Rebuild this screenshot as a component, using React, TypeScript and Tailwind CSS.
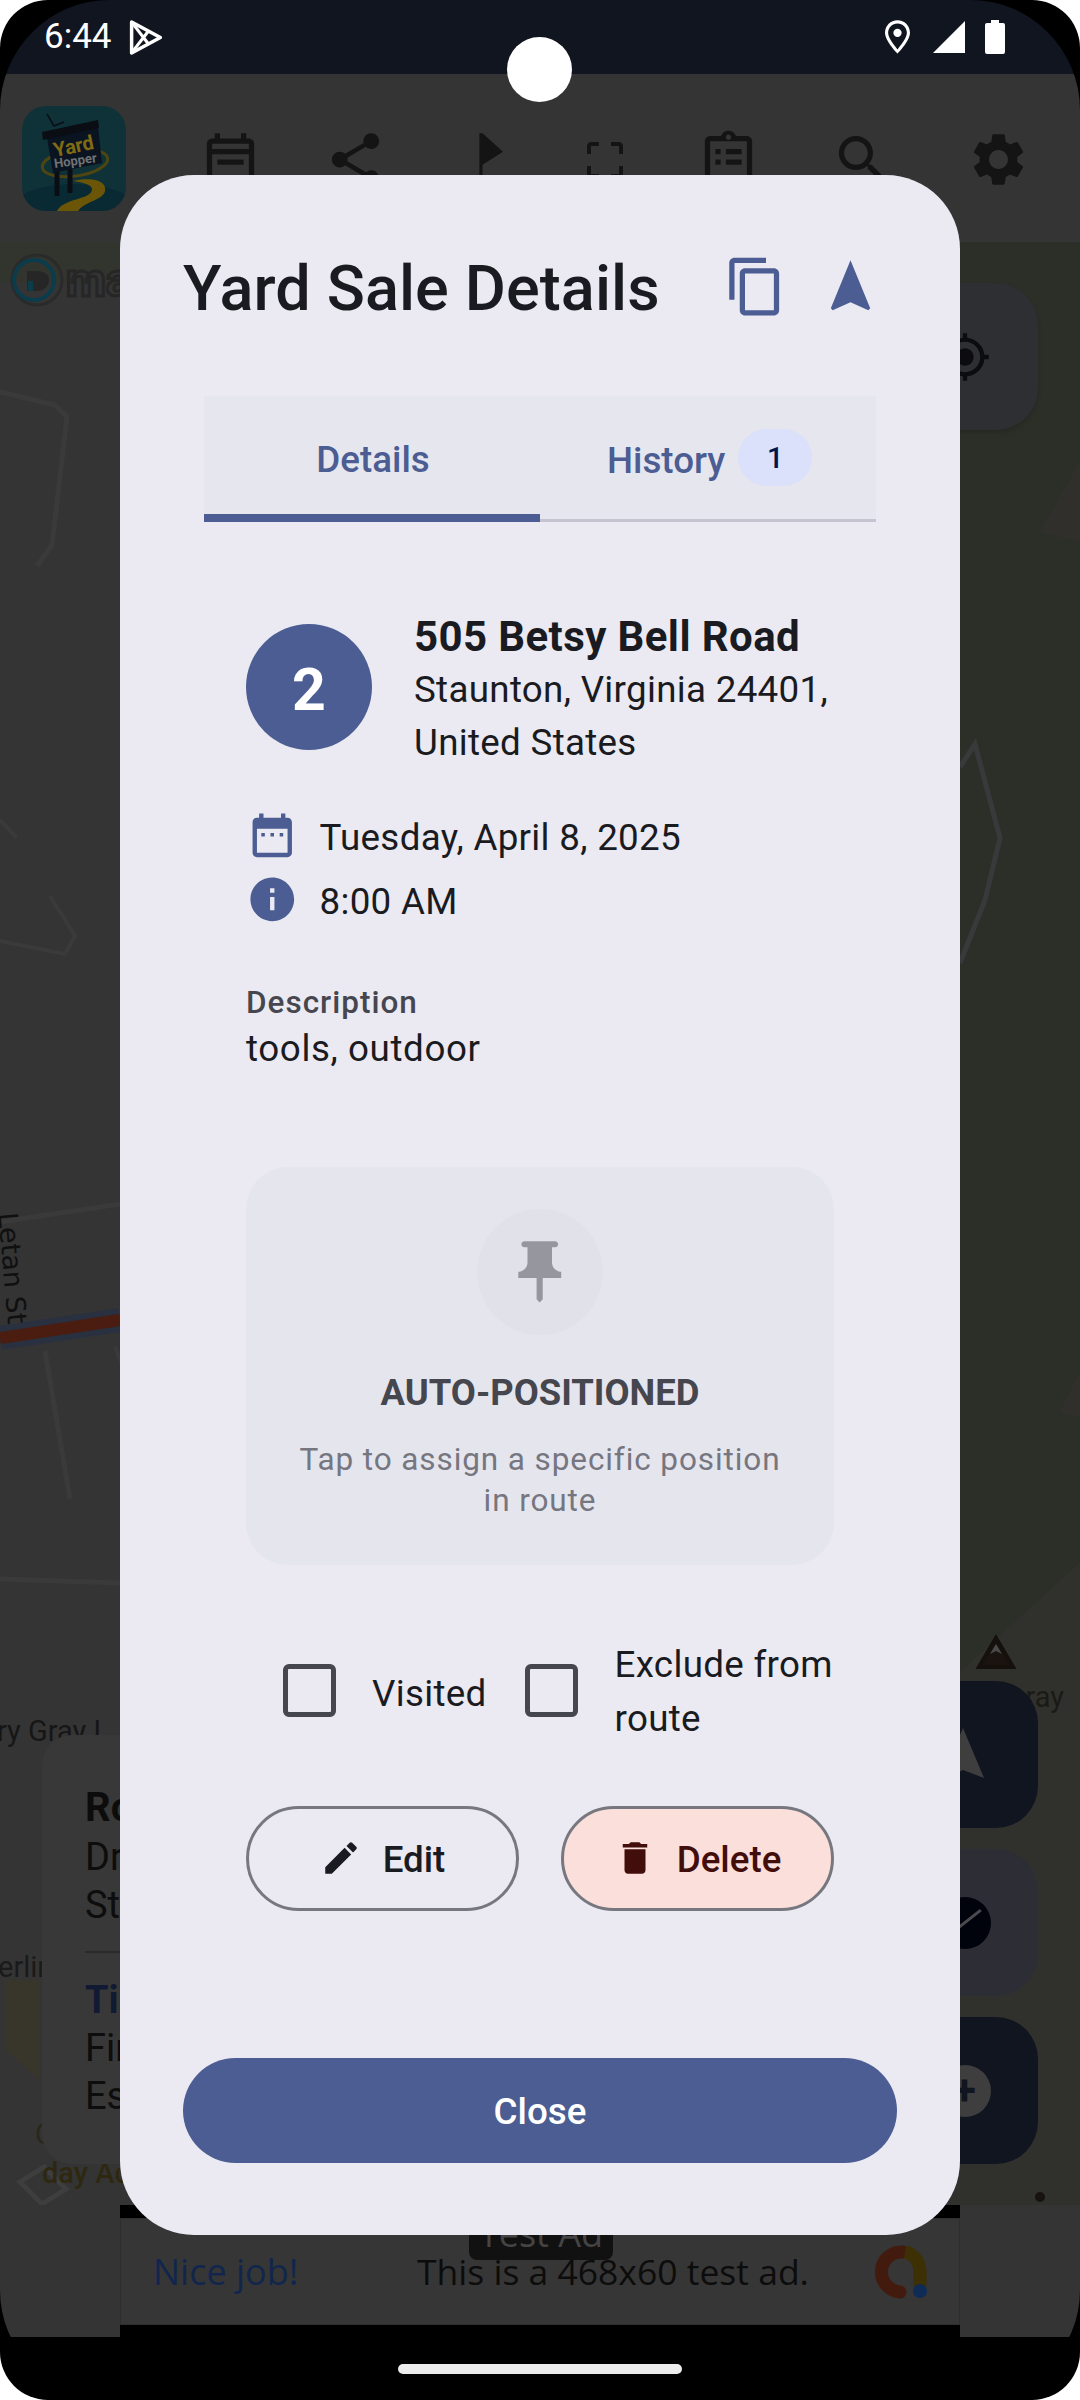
import React from "react";

const Ic = ({ d, size, className, vb = "0 0 24 24" }: { d: string; size: string; className: string; vb?: string }) => (
  <svg viewBox={vb} className={size + " " + className + " shrink-0"} fill="currentColor">
    <path d={d} fillRule="evenodd" />
  </svg>
);

const P = {
  copy: "M16 1H4c-1.1 0-2 .9-2 2v14h2V3h12V1zm3 4H8c-1.1 0-2 .9-2 2v14c0 1.1.9 2 2 2h11c1.1 0 2-.9 2-2V7c0-1.1-.9-2-2-2zm0 16H8V7h11v14z",
  nav: "M12 2L4.5 20.29l.71.71L12 18l6.79 3 .71-.71z",
  cal: "M19 4h-1V2h-2v2H8V2H6v2H5c-1.1 0-2 .9-2 2v14c0 1.1.9 2 2 2h14c1.1 0 2-.9 2-2V6c0-1.1-.9-2-2-2zM5 20V9h14v11H5zM7 11h1.6v1.6H7zM11.2 11h1.6v1.6h-1.6zM15.4 11H17v1.6h-1.6z",
  info: "M12 2C6.48 2 2 6.48 2 12s4.48 10 10 10 10-4.48 10-10S17.52 2 12 2zm1 15h-2v-6h2v6zm0-8h-2V7h2v2z",
  pin: "M16 9V4h1c.55 0 1-.45 1-1s-.45-1-1-1H7c-.55 0-1 .45-1 1s.45 1 1 1h1v5c0 1.66-1.34 3-3 3v2h5.97v7l1 1 1-1v-7H19v-2c-1.66 0-3-1.34-3-3z",
  edit: "M3 17.25V21h3.75L17.81 9.94l-3.75-3.75L3 17.25zM20.71 7.04c.39-.39.39-1.02 0-1.41l-2.34-2.34c-.39-.39-1.02-.39-1.41 0l-1.83 1.83 3.75 3.75 1.83-1.83z",
  del: "M6 19c0 1.1.9 2 2 2h8c1.1 0 2-.9 2-2V7H6v12zM19 4h-3.5l-1-1h-5l-1 1H5v2h14V4z",
  share: "M18 16.08c-.76 0-1.44.3-1.96.77L8.91 12.7c.05-.23.09-.46.09-.7s-.04-.47-.09-.7l7.05-4.11c.54.5 1.25.81 2.04.81 1.66 0 3-1.34 3-3s-1.34-3-3-3-3 1.34-3 3c0 .24.04.47.09.7L8.04 9.81C7.5 9.31 6.79 9 6 9c-1.66 0-3 1.34-3 3s1.34 3 3 3c.79 0 1.5-.31 2.04-.81l7.12 4.16c-.05.21-.08.43-.08.65 0 1.61 1.31 2.92 2.92 2.92s2.92-1.31 2.92-2.92-1.31-2.92-2.92-2.92z",
  search: "M15.5 14h-.79l-.28-.27C15.41 12.59 16 11.11 16 9.5 16 5.91 13.09 3 9.5 3S3 5.91 3 9.5 5.91 16 9.5 16c1.61 0 3.09-.59 4.23-1.57l.27.28v.79l5 4.99L20.49 19l-4.99-5zm-6 0C7.01 14 5 11.99 5 9.5S7.01 5 9.5 5 14 7.01 14 9.5 11.99 14 9.5 14z",
  gear: "M19.14 12.94c.04-.3.06-.61.06-.94 0-.32-.02-.64-.07-.94l2.03-1.58c.18-.14.23-.41.12-.61l-1.92-3.32c-.12-.22-.37-.29-.59-.22l-2.39.96c-.5-.38-1.03-.7-1.62-.94l-.36-2.54c-.04-.24-.24-.41-.48-.41h-3.84c-.24 0-.43.17-.47.41l-.36 2.54c-.59.24-1.13.57-1.62.94l-2.39-.96c-.22-.08-.47 0-.59.22L2.74 8.87c-.12.21-.08.47.12.61l2.03 1.58c-.05.3-.09.63-.09.94s.02.64.07.94l-2.03 1.58c-.18.14-.23.41-.12.61l1.92 3.32c.12.22.37.29.59.22l2.39-.96c.5.38 1.03.7 1.62.94l.36 2.54c.05.24.24.41.48.41h3.84c.24 0 .44-.17.47-.41l.36-2.54c.59-.24 1.13-.56 1.62-.94l2.39.96c.22.08.47 0 .59-.22l1.92-3.32c.12-.22.07-.47-.12-.61l-2.01-1.58zM12 15.6c-1.98 0-3.6-1.62-3.6-3.6s1.62-3.6 3.6-3.6 3.6 1.62 3.6 3.6-1.62 3.6-3.6 3.6z",
  clip: "M19 3h-4.18C14.4 1.84 13.3 1 12 1s-2.4.84-2.82 2H5c-1.1 0-2 .9-2 2v14c0 1.1.9 2 2 2h14c1.1 0 2-.9 2-2V5c0-1.1-.9-2-2-2zm-7-.5c.55 0 1 .45 1 1s-.45 1-1 1-1-.45-1-1 .45-1 1-1zM19 19H5V5h14v14zM7 8h2v2H7zM11 8h6v2h-6zM7 12h2v2H7zM11 12h6v2h-6z",
  scan: "M3 5v4h2V5h4V3H5c-1.1 0-2 .9-2 2zM5 15H3v4c0 1.1.9 2 2 2h4v-2H5v-4zM19 19h-4v2h4c1.1 0 2-.9 2-2v-4h-2v4zM19 3h-4v2h4v4h2V5c0-1.1-.9-2-2-2z",
  cross: "M12 8c-2.21 0-4 1.79-4 4s1.79 4 4 4 4-1.79 4-4-1.79-4-4-4zm8.94 3A8.994 8.994 0 0 0 13 3.06V1h-2v2.06A8.994 8.994 0 0 0 3.06 11H1v2h2.06A8.994 8.994 0 0 0 11 20.94V23h2v-2.06A8.994 8.994 0 0 0 20.94 13H23v-2h-2.06zM12 19c-3.87 0-7-3.13-7-7s3.13-7 7-7 7 3.13 7 7-3.13 7-7 7z",
};

function StatusBar() {
  return (
    <div className="h-[74px] shrink-0 bg-[#111520] relative flex items-center pl-[44px] pr-[75px] text-white">
      <span className="text-[35px] leading-[70px]">6:44</span>
      <svg viewBox="0 0 34 36" className="w-[36px] h-[37px] ml-[16px]" fill="none" stroke="white" strokeWidth="3.4" strokeLinejoin="round">
        <path d="M3 3l28 15L3 33z" />
        <path d="M3 3l17 22M3 33L20 11" strokeWidth="3" />
      </svg>
      <div className="ml-auto flex items-center">
        <svg viewBox="0 0 24 32" className="w-[25px] h-[34px]" fill="white">
          <path fillRule="evenodd" d="M12 0C5.4 0 0 5.2 0 12c0 8 12 20 12 20s12-12 12-20C24 5.2 18.6 0 12 0zm0 3c5 0 9 4 9 9 0 5-6 12-9 16-3-4-9-11-9-16 0-5 4-9 9-9zm0 5a4 4 0 100 8 4 4 0 000-8z" />
        </svg>
        <svg viewBox="0 0 32 32" className="w-[32px] h-[32px] ml-[23px]" fill="white">
          <path d="M32 0v32H0z" />
        </svg>
        <svg viewBox="0 0 20 34" className="w-[20px] h-[34px] ml-[20px]" fill="white">
          <path d="M6 0h8v3h4a2 2 0 012 2v27a2 2 0 01-2 2H2a2 2 0 01-2-2V5a2 2 0 012-2h4z" />
        </svg>
      </div>
      <div className="absolute left-[507px] top-[37px] w-[65px] h-[65px] rounded-full bg-white z-30" />
    </div>
  );
}

function Logo() {
  return (
    <div className="w-[104px] h-[105px] rounded-[24px] bg-[#0f3238] relative overflow-hidden shrink-0">
      <svg viewBox="0 0 104 105" className="absolute inset-0 w-full h-full">
        <ellipse cx="52" cy="100" rx="60" ry="22" fill="#0a2a33" />
        <ellipse cx="53" cy="57" rx="33" ry="13" fill="none" stroke="#4f4512" strokeWidth="3" transform="rotate(-8 53 57)" />
        <path d="M35 60V90M48 60V87" stroke="#0a0d14" strokeWidth="5" />
        <path d="M25 32L76 20L80 57L31 67z" fill="#0a1420" />
        <path d="M20 26L76 14L77 22L21 34z" fill="#0a0d14" />
        <path d="M25 8L32 20L42 16" fill="none" stroke="#0a0d14" strokeWidth="1.5" />
        <path d="M35 105C42 92 68 94 70 84C71 78 58 76 51 75C62 72 82 72 83 82C85 94 64 94 56 105z" fill="#6b5608" />
      </svg>
      <div className="absolute left-[31px] top-[30px] -rotate-12 text-[#806a14] text-[20px] font-bold leading-[20px]">Yard</div>
      <div className="absolute left-[32px] top-[47px] -rotate-[8deg] text-[#707275] text-[13px] font-bold leading-[16px]">Hopper</div>
    </div>
  );
}

function Toolbar() {
  const c = "text-[#141414]";
  return (
    <div className="h-[168px] shrink-0 bg-[#343434] flex items-start pt-[32px] pl-[22px] relative">
      <Logo />
      <div className="absolute left-[198.500px] top-[54px] h-[63px] flex items-center">
        <svg viewBox="0 0 24 24" className={"w-[63px] h-[63px] " + c} fill="currentColor">
          <path fillRule="evenodd" d="M19 4h-1V2h-2v2H8V2H6v2H5c-1.1 0-2 .9-2 2v14c0 1.1.9 2 2 2h14c1.1 0 2-.9 2-2V6c0-1.1-.9-2-2-2zm0 16H5V10h14v10zM5 8V6h14v2H5zM7 12h10v2H7z" />
        </svg>
        <Ic d={P.share} size="w-[63px] h-[63px] ml-[62px]" className={c} />
        <svg viewBox="0 0 24 24" className={"w-[63px] h-[63px] ml-[74.500px] " + c} fill="currentColor">
          <path d="M7 2h1.200v22H7zM8.200 2L16 9 8.200 14z" />
        </svg>
        <Ic d={P.scan} size="w-[48px] h-[48px] ml-[57px]" className={c} />
        <Ic d={P.clip} size="w-[63px] h-[63px] ml-[67.500px]" className={c} />
        <Ic d={P.search} size="w-[63px] h-[63px] ml-[71.500px]" className={c} />
        <Ic d={P.gear} size="w-[63px] h-[63px] ml-[72.500px]" className={c} />
      </div>
    </div>
  );
}

function MapCanvas() {
  return (
    <div className="flex-1 relative bg-[#343434] overflow-hidden">
      <svg viewBox="0 0 1080 1963" className="absolute inset-0 w-full h-full" fill="none">
        <path d="M900 0h180v1963h-180z" fill="#2c2f28" />
        <path d="M0 0h900v40H0z" fill="#32342e" />
        <path d="M960 1430L1080 1320V1963H830z" fill="#30302c" />
        <path d="M1040 290L1080 220V300z" fill="#302f2c" />
        <path d="M1060 1170L1080 1130V1175z" fill="#302f2c" />
        <path d="M0 150L55 163L67 175L52 303L37 324" stroke="#3a3a3a" strokeWidth="5" />
        <path d="M0 578L17 596" stroke="#3a3a3a" strokeWidth="4" />
        <path d="M50 654L75 694L65 712L0 699" stroke="#3a3a3a" strokeWidth="4" />
        <path d="M960 525L975 502L1000 596L985 658L960 721" stroke="#38393a" strokeWidth="5" />
        <path d="M0 980L120 962" stroke="#3a3a3a" strokeWidth="5" />
        <path d="M45 1109L70 1257" stroke="#3a3a3a" strokeWidth="5" />
        <path d="M115 1105L125 1130" stroke="#3a3a3a" strokeWidth="4" />
        <path d="M0 1337L120 1341" stroke="#3a3a3a" strokeWidth="5" />
        <path d="M0 1096L120 1078" stroke="#293040" strokeWidth="24" />
        <path d="M0 1096L120 1078" stroke="#4b1c10" strokeWidth="12" />
        <path d="M5 1738h35v100l-35-30z" fill="#38352b" />
        <path d="M20 1940l24-15 22 22-24 15z" stroke="#3e3e3e" strokeWidth="5" />
        <path d="M996 1396L1013 1425H979z" stroke="#16100c" strokeWidth="4" fill="#1b130f" />
        <path d="M996 1402l6 10-6-3-6 3z" fill="#4a4a4a" />
      </svg>
      <div className="absolute left-[10px] top-[11px] flex items-center">
        <svg viewBox="0 0 54 54" className="w-[54px] h-[54px]" fill="none">
          <circle cx="27" cy="27" r="25" stroke="#2a2a2a" strokeWidth="3" />
          <circle cx="24" cy="27" r="20" stroke="#0b3c4c" strokeWidth="4" />
          <path d="M17 18h10c8 0 12 4 12 9s-4 11-12 11H17z" fill="#262626" />
          <path d="M18 28h5v10h-5z" fill="#0b3c4c" />
        </svg>
        <span className="ml-[2px] text-[46px] font-bold leading-[54px] text-[#343434] [-webkit-text-stroke:3px_#262626]">mapbox</span>
      </div>
      <span className="absolute left-[-44px] top-[1006px] rotate-[85deg] origin-center text-[27px] text-[#101010] whitespace-nowrap [font-family:'DejaVu_Sans',sans-serif]">Letan St</span>
      <span className="absolute left-[-3px] top-[1472px] text-[29px] leading-[34px] text-[#161616] whitespace-nowrap">ry Gray L</span>
      <span className="absolute left-[-2px] top-[1708px] text-[29px] leading-[34px] text-[#1a1a1a] whitespace-nowrap">erling St</span>
      <span className="absolute left-[35px] top-[1875px] text-[29px] leading-[34px] text-[#2a271c] whitespace-nowrap">CF Ric</span>
      <span className="absolute left-[42px] top-[1914px] text-[29px] leading-[34px] text-[#2e2810] font-medium whitespace-nowrap">day Ac</span>
      <span className="absolute right-[16px] top-[1438px] text-[29px] leading-[34px] text-[#1c1a16] whitespace-nowrap">ray</span>

      <div className="absolute left-[891px] top-[41px] w-[147px] h-[147px] rounded-[42px] bg-[#2e2f33] flex items-center justify-center shadow-md">
        <Ic d={P.cross} size="w-[52px] h-[52px]" className="text-[#0c0c10]" />
      </div>
      <div className="absolute left-[891px] top-[1439px] w-[147px] h-[147px] rounded-[42px] bg-[#111520] flex items-center justify-center">
        <svg viewBox="0 0 63 63" className="w-[63px] h-[63px]" fill="#3e3e3e">
          <path d="M30 5L51 55 30 47 7 58z" />
        </svg>
      </div>
      <div className="absolute left-[891px] top-[1607px] w-[147px] h-[147px] rounded-[42px] bg-[#2d2e35] flex items-center justify-center">
        <div className="w-[52px] h-[52px] rounded-full bg-[#01030c] relative">
          <div className="absolute left-[6px] top-[24px] w-[40px] h-[3px] bg-[#4a4a4e] -rotate-[38deg]" />
        </div>
      </div>
      <div className="absolute left-[891px] top-[1775px] w-[147px] h-[147px] rounded-[42px] bg-[#111520] flex items-center justify-center">
        <div className="w-[52px] h-[52px] rounded-full bg-[#3e3e3e] flex items-center justify-center text-[#111520] text-[42px] font-bold leading-none">+</div>
      </div>
      <div className="absolute left-[1035px] top-[1950px] w-[10px] h-[10px] rounded-full bg-[#17120e]" />

      <div className="absolute left-[42px] top-[1493px] w-[200px] h-[429px] rounded-[30px] bg-[#383838] pl-[43px] pt-[48px] flex flex-col">
        <div className="text-[40px] font-bold leading-[50px] text-[#0c0c0c] whitespace-nowrap">Route</div>
        <div className="text-[38px] leading-[48px] text-[#0d0d0d] whitespace-nowrap">Drive</div>
        <div className="text-[38px] leading-[48px] text-[#0d0d0d] whitespace-nowrap">Stops</div>
        <div className="h-[2px] bg-[#2a2a2a] mt-[22px]" />
        <div className="text-[38px] font-bold leading-[48px] text-[#111a33] whitespace-nowrap mt-[23px]">Time</div>
        <div className="text-[38px] leading-[48px] text-[#0d0d0d] whitespace-nowrap">First</div>
        <div className="text-[38px] leading-[48px] text-[#0d0d0d] whitespace-nowrap">Est</div>
      </div>
    </div>
  );
}

function AdArea() {
  return (
    <div className="h-[132px] shrink-0 bg-[#343434] px-[120px]">
      <div className="h-full bg-black pt-[13px] pb-[12px]">
        <div className="h-full bg-[#363636] border border-[#2e2e2e] relative flex items-center pl-[32px] pr-[32px] [font-family:'Open_Sans',sans-serif]">
          <span className="text-[36px] font-medium text-[#12264d]">Nice job!</span>
          <span className="absolute left-[296px] text-[35.500px] text-[#0c0c0c] whitespace-nowrap">This is a 468x60 test ad.</span>
          <div className="absolute left-[348px] top-[-7px] w-[144px] h-[48px] rounded-[8px] bg-[#111111] text-[#444444] text-[36px] leading-[44px] text-center">Test Ad</div>
          <svg viewBox="0 0 54 54" className="absolute left-[752px] top-[26px] w-[54px] h-[54px]" fill="none">
            <path d="M30 7A20 20 0 1 0 27 47" stroke="#431a0e" strokeWidth="13" strokeLinecap="round" />
            <path d="M32 7c10 2 15 11 15 20v14" stroke="#3c3004" strokeWidth="13" />
            <circle cx="47" cy="46" r="7" fill="#0f2c56" />
          </svg>
        </div>
      </div>
    </div>
  );
}

function Check() {
  return <div className="w-[53px] h-[53px] rounded-[6px] border-[5.500px] border-[#46464f] shrink-0" />;
}

function Dialog() {
  return (
    <div className="absolute left-[120px] top-[175px] w-[840px] h-[2060px] rounded-[74px] bg-[#ebeaf3] flex flex-col text-[#1a1b20] z-20">
      <div className="h-[63px] mt-[80px] pl-[63px] flex items-center">
        <h1 className="text-[63px] leading-[63px] font-medium tracking-[0.1px] text-[#1a1b20] whitespace-nowrap translate-y-[2px]">Yard Sale Details</h1>
        <Ic d={P.copy} size="w-[63px] h-[63px] absolute left-[604px]" className="text-[#4b5d92]" />
        <Ic d={P.nav} size="w-[63px] h-[63px] absolute left-[699px]" className="text-[#4b5d92]" />
      </div>

      <div className="mt-[78px] mx-[84px] h-[126px] bg-[#e6e6ee] relative flex shrink-0 border-b-[3px] border-[#c6c4d0]">
        <div className="w-1/2 flex items-center justify-center text-[36.750px] font-medium text-[#4b5d92] pb-[2px] leading-[50px]">
          <span className="translate-y-[3px] translate-x-[1px]">Details</span>
        </div>
        <div className="w-1/2 flex items-center text-[36.750px] font-medium text-[#4b5d92] pl-[67px] leading-[50px]">
          <span className="translate-y-[3px]">History</span>
          <span className="ml-[13px] w-[74px] h-[57px] rounded-full bg-[#dbe1fa] text-[#00164a] text-[29px] flex items-center justify-center">1</span>
        </div>
        <div className="absolute left-0 bottom-[-3px] w-1/2 h-[8px] bg-[#4b5d92]" />
      </div>

      <div className="mt-[84px] ml-[126px] flex items-center">
        <div className="w-[126px] h-[126px] rounded-full bg-[#4b5d92] text-white flex items-center justify-center text-[59px] font-bold leading-none shrink-0">
          <span className="translate-y-[2px]">2</span>
        </div>
        <div className="ml-[42px] flex flex-col">
          <div className="text-[42px] leading-[54px] font-bold tracking-[0.4px] whitespace-nowrap translate-y-[4px]">505 Betsy Bell Road</div>
          <div className="text-[36.750px] leading-[54px] tracking-[0.3px] whitespace-nowrap translate-y-[3px]">Staunton, Virginia 24401,</div>
          <div className="text-[36.750px] leading-[54px] tracking-[0.3px] whitespace-nowrap translate-y-[2px]">United States</div>
        </div>
      </div>

      <div className="mt-[41px] ml-[126px] flex flex-col gap-[11.500px]">
        <div className="flex items-center h-[52.500px]">
          <Ic d={P.cal} size="w-[52.500px] h-[52.500px]" className="text-[#4b5d92]" />
          <span className="ml-[21px] text-[36.750px] leading-[54px] tracking-[0.3px] translate-y-[3px]">Tuesday, April 8, 2025</span>
        </div>
        <div className="flex items-center h-[52.500px]">
          <Ic d={P.info} size="w-[52.500px] h-[52.500px]" className="text-[#4b5d92]" />
          <span className="ml-[21px] text-[36.750px] leading-[54px] tracking-[0.3px] translate-y-[3px]">8:00 AM</span>
        </div>
      </div>

      <div className="mt-[54px] ml-[126px]">
        <div className="text-[31.500px] leading-[42px] font-medium tracking-[1px] text-[#46464f] translate-y-[2px]">Description</div>
        <div className="text-[36.750px] leading-[54px] tracking-[0.6px]">tools, outdoor</div>
      </div>

      <div className="mt-[91px] mx-[126px] rounded-[42px] bg-[#e5e5ee] pt-[42px] pb-[43px] flex flex-col items-center shrink-0">
        <div className="w-[126px] h-[126px] rounded-full bg-[#e1e1e9] flex items-center justify-center">
          <Ic d={P.pin} size="w-[73.500px] h-[73.500px]" className="text-[#96969f]" />
        </div>
        <div className="mt-[33px] text-[36.400px] leading-[50px] font-bold text-[#46464f]">AUTO-POSITIONED</div>
        <div className="mt-[21px] w-[500px] text-center text-[31.500px] leading-[41.500px] tracking-[0.9px] text-[#767680]">
          Tap to assign a specific position in route
        </div>
      </div>

      <div className="mt-[73px] ml-[163px] flex items-center text-[36.750px] leading-[54px] tracking-[0.3px]">
        <div className="-translate-y-[1px]">
          <Check />
        </div>
        <span className="ml-[36px] w-[114px] translate-y-[2px]">Visited</span>
        <div className="ml-[39px] -translate-y-[1px]">
          <Check />
        </div>
        <span className="ml-[36.500px] w-[232px]">Exclude from route</span>
      </div>

      <div className="mt-[60px] mx-[126px] grid grid-cols-2 gap-[42px] text-[36.750px] font-medium">
        <button className="h-[105px] rounded-full border-[3px] border-[#76777f] flex items-center justify-center text-[#1a1b20]">
          <Ic d={P.edit} size="w-[42px] h-[42px]" className="" />
          <span className="ml-[21px] translate-y-[2px]">Edit</span>
        </button>
        <button className="h-[105px] rounded-full border-[3px] border-[#76777f] bg-[#fbdfdb] flex items-center justify-center text-[#410e0b]">
          <Ic d={P.del} size="w-[42px] h-[42px]" className="" />
          <span className="ml-[21px] translate-y-[2px]">Delete</span>
        </button>
      </div>

      <button className="mt-[147px] mx-[63px] h-[105px] rounded-full bg-[#4b5d92] text-white text-[36.750px] font-medium flex items-center justify-center">
        <span className="translate-y-[2px]">Close</span>
      </button>
    </div>
  );
}

export default function App() {
  return (
    <div className="w-[1080px] h-[2400px] bg-white relative overflow-hidden font-[Roboto,sans-serif]">
      <div className="absolute inset-0 rounded-[48px] bg-black" />
      <div className="absolute inset-0 rounded-[110px] overflow-hidden flex flex-col bg-black">
        <StatusBar />
        <Toolbar />
        <MapCanvas />
        <AdArea />
        <div className="h-[63px] shrink-0 bg-black flex justify-center pt-[27px]">
          <div className="w-[284px] h-[10px] rounded-full bg-[#ececec]" />
        </div>
      </div>
      <Dialog />
    </div>
  );
}
